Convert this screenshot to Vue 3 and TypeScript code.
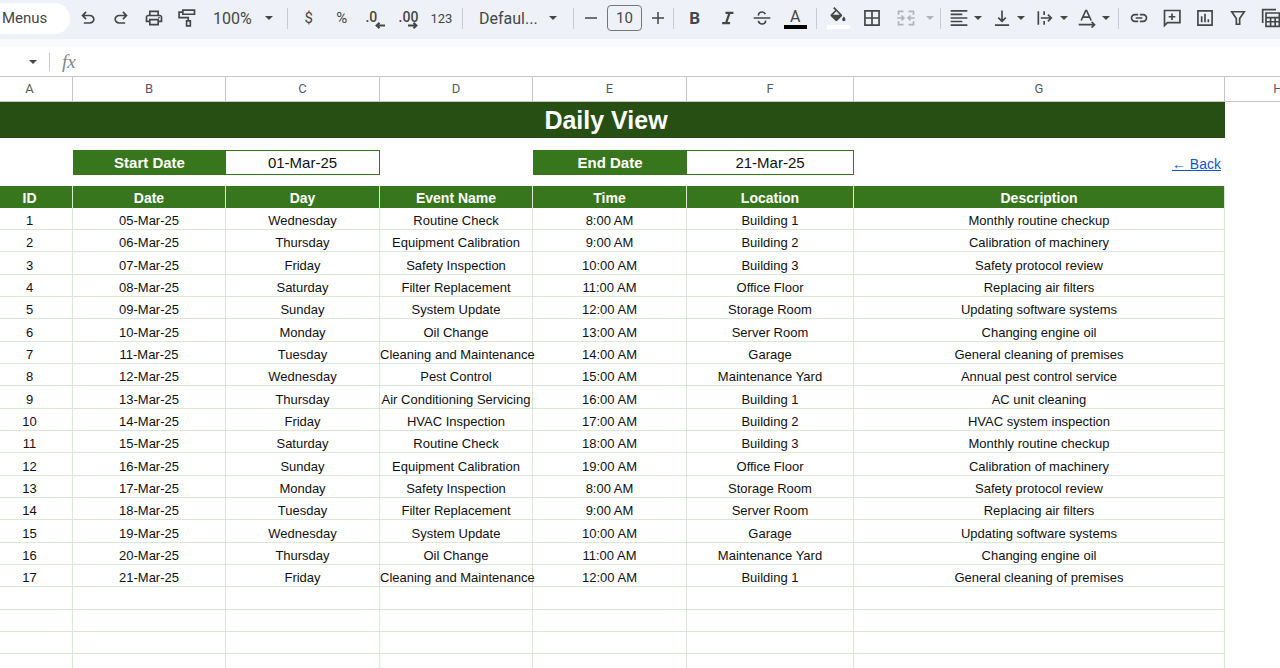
<script setup lang="ts">
import { ref } from 'vue'

interface Entry {
  id: number
  date: string
  day: string
  event: string
  time: string
  location: string
  description: string
}

const letters: string[] = ['A', 'B', 'C', 'D', 'E', 'F', 'G', 'H']
const headings: string[] = ['ID', 'Date', 'Day', 'Event Name', 'Time', 'Location', 'Description']
const emptyRows = 4

const days = ['Wednesday', 'Thursday', 'Friday', 'Saturday', 'Sunday', 'Monday', 'Tuesday']
const jobs: [string, string][] = [
  ['Routine Check', 'Monthly routine checkup'],
  ['Equipment Calibration', 'Calibration of machinery'],
  ['Safety Inspection', 'Safety protocol review'],
  ['Filter Replacement', 'Replacing air filters'],
  ['System Update', 'Updating software systems'],
  ['Oil Change', 'Changing engine oil'],
  ['Cleaning and Maintenance', 'General cleaning of premises'],
  ['Pest Control', 'Annual pest control service'],
  ['Air Conditioning Servicing', 'AC unit cleaning'],
  ['HVAC Inspection', 'HVAC system inspection'],
]
const places = [
  'Building 1', 'Building 2', 'Building 3', 'Office Floor',
  'Storage Room', 'Server Room', 'Garage', 'Maintenance Yard',
]

// One event a day; days, jobs, hours and places each repeat in their own cycle.
const entries: Entry[] = Array.from({ length: 17 }, (_, i) => {
  const hour = 8 + (i % 12)
  const [event, description] = jobs[i % jobs.length]
  return {
    id: i + 1,
    date: `${String(i + 5).padStart(2, '0')}-Mar-25`,
    day: days[i % days.length],
    event,
    time: `${hour}:00 AM`,
    location: places[i % places.length],
    description,
  }
})

const zoom = ref('100%')
const font = ref('Defaul...')
const size = ref('10')
const formula = ref('')
</script>

<template>
  <div class="app">
    <div class="toolbar" role="toolbar" aria-label="Formatting">
      <button class="menus" type="button">Menus</button>

      <div class="group history">
        <button type="button" aria-label="Undo">
          <svg class="icon" viewBox="0 -960 960 960"><path d="M280-200v-80h284q63 0 109.500-40T720-420q0-60-46.500-100T564-560H312l104 104-56 56-200-200 200-200 56 56-104 104h252q97 0 166.500 63T800-420q0 94-69.500 157T564-200H280Z" /></svg>
        </button>
        <button type="button" aria-label="Redo">
          <svg class="icon" viewBox="0 -960 960 960"><path d="M396-200q-97 0-166.500-63T160-420q0-94 69.500-157T396-640h252L544-744l56-56 200 200-200 200-56-56 104-104H396q-63 0-109.500 40T240-420q0 60 46.500 100T396-280h284v80H396Z" /></svg>
        </button>
        <button type="button" aria-label="Print">
          <svg class="icon" viewBox="0 -960 960 960"><path d="M640-640v-120H320v120h-80v-200h480v200h-80Zm80 180q17 0 28.500-11.500T760-500q0-17-11.500-28.500T720-540q-17 0-28.500 11.500T680-500q0 17 11.500 28.500T720-460Zm-80 260v-160H320v160h320Zm80 80H240v-160H80v-240q0-51 35-85.500t85-34.500h560q51 0 85.500 34.500T880-520v240H720v160Zm80-240v-160q0-17-11.500-28.500T760-560H200q-17 0-28.500 11.500T160-520v160h80v-80h480v80h80Z" /></svg>
        </button>
        <button type="button" aria-label="Paint format">
          <svg class="icon line" viewBox="0 0 24 24"><path d="M7 2.500h14v5H7zM7 5H2.500v6.500H13.500V15M11.500 15.500h4.500v6h-4.500z" /></svg>
        </button>
      </div>

      <label class="picker zoom">
        <select v-model="zoom" aria-label="Zoom"><option>100%</option></select>
        <svg class="caret" viewBox="0 0 10 5"><path d="M0 0h10L5 5z" /></svg>
      </label>
      <i class="rule"></i>

      <div class="group numbers">
        <button type="button" aria-label="Format as currency">$</button>
        <button type="button" aria-label="Format as percent">%</button>
        <button class="decimal" type="button" aria-label="Decrease decimal places">
          <span>.0</span>
          <svg viewBox="0 0 10 7"><path d="M10 3.500H2M4.500 .8 1.600 3.500l2.900 2.700" /></svg>
        </button>
        <button class="decimal" type="button" aria-label="Increase decimal places">
          <span>.00</span>
          <svg viewBox="0 0 10 7"><path d="M0 3.500h8M5.500 .8l2.900 2.700-2.900 2.700" /></svg>
        </button>
        <button class="digits" type="button" aria-label="More formats">123</button>
      </div>
      <i class="rule"></i>

      <label class="picker font">
        <select v-model="font" aria-label="Font"><option>Defaul...</option></select>
        <svg class="caret" viewBox="0 0 10 5"><path d="M0 0h10L5 5z" /></svg>
      </label>
      <i class="rule"></i>

      <div class="stepper">
        <button type="button" aria-label="Decrease font size">
          <svg class="icon line" viewBox="0 0 24 24"><path d="M4 12h16" /></svg>
        </button>
        <input v-model="size" type="text" aria-label="Font size" />
        <button type="button" aria-label="Increase font size">
          <svg class="icon line" viewBox="0 0 24 24"><path d="M4 12h16M12 4v16" /></svg>
        </button>
      </div>
      <i class="rule"></i>

      <div class="group style">
        <button class="bold" type="button" aria-label="Bold">B</button>
        <button type="button" aria-label="Italic">
          <svg class="icon" viewBox="0 0 24 24"><path d="M9 4.500v2.600h3l-3.300 9.800H5v2.600h9.500v-2.600h-3l3.300-9.800h3.700V4.500z" /></svg>
        </button>
        <button type="button" aria-label="Strikethrough">
          <svg class="icon line" viewBox="0 0 24 24"><path d="M2 12h20M7.800 9.200C7.600 6.200 9.500 4.800 12 4.800c2 0 3.300 .9 4 2.600M7.600 15.500c.6 2.500 2.200 3.700 4.500 3.700 2.600 0 4.300-1.400 4.200-4.200" /></svg>
        </button>
        <button class="swatch" type="button" aria-label="Text color">
          <span>A</span><i class="ink"></i>
        </button>
      </div>
      <i class="rule"></i>

      <div class="group cells">
        <button class="swatch" type="button" aria-label="Fill color">
          <svg class="icon" viewBox="0 0 24 24"><path d="M16.560 8.940L7.620 0 6.210 1.410l2.380 2.380-5.150 5.150c-.59.59-.59 1.540 0 2.120l5.500 5.500c.29.29.68.44 1.060.44s.77-.15 1.060-.44l5.500-5.500c.59-.58.59-1.530 0-2.120zM6 9.200L10 5.210 14 9.200H6zM19 11.500s-2 2.170-2 3.500c0 1.100.9 2 2 2s2-.9 2-2c0-1.330-2-3.500-2-3.500z" /></svg>
          <i class="paper"></i>
        </button>
        <button type="button" aria-label="Borders">
          <svg class="icon line" viewBox="0 0 24 24"><path d="M3.500 3.500h17v17h-17zM12 3.500v17M3.500 12h17" /></svg>
        </button>
        <button class="faded" type="button" aria-label="Merge cells">
          <svg class="icon line" viewBox="0 0 24 24"><path d="M9 4H3v4M3 16v4h6M15 4h6v4M21 16v4h-6M1.500 12H9M6.500 9l3 3-3 3M22.500 12H15M17.500 9l-3 3 3 3" /></svg>
        </button>
      </div>
      <button class="mini faded" type="button" aria-label="Merge options">
        <svg class="caret" viewBox="0 0 10 5"><path d="M0 0h10L5 5z" /></svg>
      </button>
      <i class="rule"></i>

      <div class="group align">
        <button type="button" aria-label="Horizontal align">
          <svg class="icon line" viewBox="0 0 24 24"><path d="M2 3.500h20M2 7.700h14M2 12h20M2 16.200h14M2 20.500h20" /></svg>
          <svg class="caret" viewBox="0 0 10 5"><path d="M0 0h10L5 5z" /></svg>
        </button>
        <button type="button" aria-label="Vertical align">
          <svg class="icon line" viewBox="0 0 24 24"><path d="M3.500 20.500h17M12 3v12.500M7.500 11.500 12 16l4.500-4.500" /></svg>
          <svg class="caret" viewBox="0 0 10 5"><path d="M0 0h10L5 5z" /></svg>
        </button>
        <button type="button" aria-label="Text wrapping">
          <svg class="icon line" viewBox="0 0 24 24"><path d="M4 4v16M11 4v4.500M11 15.500V20M7 12h12M15.500 8l4 4-4 4" /></svg>
          <svg class="caret" viewBox="0 0 10 5"><path d="M0 0h10L5 5z" /></svg>
        </button>
        <button type="button" aria-label="Text rotation">
          <svg class="icon line" viewBox="0 0 24 24"><path d="M5 15 10.500 3h1L17 15M7 11h8M2 20h18M17.500 16.500 21 20l-3.500 3.500" /></svg>
          <svg class="caret" viewBox="0 0 10 5"><path d="M0 0h10L5 5z" /></svg>
        </button>
      </div>
      <i class="rule"></i>

      <div class="group insert">
        <button type="button" aria-label="Insert link">
          <svg class="icon" viewBox="0 -960 960 960"><path d="M440-280H280q-83 0-141.500-58.500T80-480q0-83 58.500-141.500T280-680h160v80H280q-50 0-85 35t-35 85q0 50 35 85t85 35h160v80ZM320-440v-80h320v80H320Zm200 160v-80h160q50 0 85-35t35-85q0-50-35-85t-85-35H520v-80h160q83 0 141.500 58.500T880-480q0 83-58.500 141.500T680-280H520Z" /></svg>
        </button>
        <button type="button" aria-label="Insert comment">
          <svg class="icon line" viewBox="0 0 24 24"><path d="M3 21V3h18.500v14.500H6.500zM12 6.500v8M8 10.500h8" /></svg>
        </button>
        <button type="button" aria-label="Insert chart">
          <svg class="icon line" viewBox="0 0 24 24"><path d="M3.500 3.500h17v17h-17zM8 10v7M12 7v10M16 13.500V17" /></svg>
        </button>
        <button type="button" aria-label="Create a filter">
          <svg class="icon line" viewBox="0 0 24 24"><path d="M4.500 4.500h15L14 12.500V19.500h-4v-7z" /></svg>
        </button>
        <button type="button" aria-label="Table views">
          <svg class="icon line" viewBox="0 0 24 24"><path d="M2 18V2h16M6 6h16v16H6zM6 11.500h16M6 16.500h16M11.500 11.500V22M17 11.500V22" /></svg>
        </button>
      </div>
    </div>

    <div class="formula">
      <button class="namebox" type="button" aria-label="Name box">
        <svg class="caret" viewBox="0 0 10 5"><path d="M0 0h10L5 5z" /></svg>
      </button>
      <i class="rule"></i>
      <label class="fx" for="formula-input">fx</label>
      <input id="formula-input" v-model="formula" type="text" />
    </div>

    <main class="viewport">
      <table class="sheet">
        <colgroup>
          <col v-for="l in letters" :key="l" :class="`col-${l.toLowerCase()}`" />
        </colgroup>
        <thead>
          <tr class="letters">
            <th v-for="l in letters" :key="l" scope="col">{{ l }}</th>
          </tr>
        </thead>
        <tbody>
          <tr class="title"><th colspan="7">Daily View</th><td></td></tr>
          <tr class="spacer"><td colspan="8"></td></tr>
          <tr class="range">
            <td></td>
            <th scope="row">Start Date</th>
            <td class="value">01-Mar-25</td>
            <td></td>
            <th scope="row">End Date</th>
            <td class="value">21-Mar-25</td>
            <td class="back"><a href="#">← Back</a></td>
            <td></td>
          </tr>
          <tr class="spacer thin"><td colspan="8"></td></tr>
          <tr class="headings">
            <th v-for="h in headings" :key="h" scope="col">{{ h }}</th>
            <td></td>
          </tr>
        </tbody>
        <tbody class="entries">
          <tr v-for="e in entries" :key="e.id">
            <td>{{ e.id }}</td>
            <td>{{ e.date }}</td>
            <td>{{ e.day }}</td>
            <td>{{ e.event }}</td>
            <td>{{ e.time }}</td>
            <td>{{ e.location }}</td>
            <td>{{ e.description }}</td>
            <td></td>
          </tr>
          <tr v-for="n in emptyRows" :key="`empty-${n}`">
            <td v-for="l in letters" :key="l"></td>
          </tr>
        </tbody>
      </table>
    </main>
  </div>
</template>

<style>
body {
  margin: 0;
  background: #fff;
}
</style>

<style scoped>
.app {
  height: 100vh;
  display: flex;
  flex-direction: column;
  overflow: hidden;
  color: #444746;
  font-family: Roboto, "Liberation Sans", sans-serif;
}

button,
input,
select {
  margin: 0;
  padding: 0;
  border: 0;
  background: none;
  color: inherit;
  font: inherit;
  appearance: none;
}

.toolbar {
  flex: none;
  display: flex;
  align-items: center;
  height: 39px;
  padding-bottom: 3px;
  box-sizing: border-box;
  background: #eef2f8;
  font-size: 16px;
}

.toolbar > * {
  flex: none;
}

.menus {
  width: 70px;
  height: 31px;
  margin-right: 1px;
  padding-left: 2px;
  background: #fff;
  border-radius: 0 16px 16px 0;
  font-size: 15px;
  text-align: left;
}

.group {
  display: grid;
  grid-auto-flow: column;
  grid-auto-columns: minmax(0, 1fr);
  height: 32px;
}

.group button {
  display: flex;
  align-items: center;
  justify-content: center;
}

.icon {
  flex: none;
  width: 20px;
  height: 20px;
  fill: currentColor;
}

.icon.line {
  fill: none;
  stroke: currentColor;
  stroke-width: 2;
}

.caret {
  flex: none;
  width: 8px;
  height: 4px;
  fill: currentColor;
}

.rule {
  width: 1px;
  height: 21px;
  margin: 0 4px;
  background: #c7cbd1;
}

.history { width: 132px; }
.numbers { width: 166px; font-size: 15px; }
.style { width: 134px; }
.cells { width: 102px; }
.align { width: 171px; margin-left: 4px; margin-right: -6px; }
.insert { width: 164px; }

.picker {
  display: grid;
  align-items: center;
}

.picker > * {
  grid-area: 1 / 1;
}

.picker .caret {
  justify-self: end;
  margin-right: 10px;
  pointer-events: none;
}

.picker select {
  height: 32px;
  padding-left: 10px;
}

.zoom { width: 80px; }
.font { width: 98px; margin: 0 2px; }

.decimal {
  position: relative;
  font-weight: 500;
}

.group .decimal {
  justify-content: flex-start;
  padding: 0 0 3px 7px;
}

.decimal svg {
  position: absolute;
  right: 7px;
  bottom: 5px;
  width: 10px;
  height: 7px;
  fill: none;
  stroke: currentColor;
  stroke-width: 2;
}

.numbers .decimal {
  font-size: 14px;
}

.numbers .digits {
  font-size: 13px;
}

.stepper {
  display: flex;
  align-items: center;
  gap: 6px;
  margin: 0 1px 0 3px;
}

.stepper button {
  display: flex;
  justify-content: center;
  width: 20px;
}

.stepper .icon {
  width: 18px;
  height: 18px;
}

.stepper input {
  width: 35px;
  height: 26px;
  box-sizing: border-box;
  border: 1px solid #747775;
  border-radius: 4px;
  font-size: 15px;
  text-align: center;
}

.bold {
  font-size: 17px;
  font-weight: 700;
}

.group .swatch {
  flex-direction: column;
  justify-content: flex-end;
  padding-bottom: 5px;
}

.swatch span {
  line-height: 17px;
}

.swatch .icon {
  margin-bottom: -2px;
}

.swatch i {
  width: 23px;
  height: 4px;
}

.ink { background: #000; }
.paper { background: #fff; }

.faded {
  color: #b0b4b8;
}

.mini {
  display: flex;
  justify-content: center;
  width: 13px;
}

.group.align button {
  justify-content: flex-start;
  gap: 5px;
}

.formula {
  flex: none;
  display: flex;
  align-items: center;
  height: 37px;
  box-sizing: border-box;
  border-top: 8px solid #f8fafd;
}

.namebox {
  display: flex;
  justify-content: flex-end;
  width: 37px;
  margin-right: 8px;
}

.formula .rule {
  height: 18px;
}

.fx {
  margin-left: 8px;
  color: #80868b;
  font: italic 19px "Liberation Serif", serif;
}

.formula input {
  flex: 1;
  margin-left: 12px;
  outline: 0;
}

.viewport {
  flex: 1;
  min-height: 0;
  overflow: hidden;
  border-top: 1px solid #c4c7c5;
}

/* The first and last columns run past the edges of the viewport. */
.sheet {
  width: calc(100% + 65px);
  margin-left: -13px;
  table-layout: fixed;
  border-collapse: separate;
  border-spacing: 0;
  color: #111;
  font-family: "Liberation Sans", Arial, sans-serif;
  font-size: 13px;
  text-align: center;
}

.col-a { width: 86px; }
.col-b, .col-d { width: 153px; }
.col-c, .col-e { width: 154px; }
.col-f { width: 167px; }
.col-h { width: 107px; }

th,
td {
  box-sizing: border-box;
  padding: 0;
  line-height: 18px;
  white-space: nowrap;
}

.letters th {
  height: 25px;
  padding-bottom: 2px;
  border-right: 1px solid #c4c7c5;
  border-bottom: 1px solid #c4c7c5;
  color: #575b5f;
  font: 13px Roboto, sans-serif;
}

.title th {
  height: 36px;
  background: #274e13;
  color: #fff;
  font-size: 25px;
  line-height: 30px;
}

.spacer td { height: 12px; }
.spacer.thin td { height: 11px; }

.range th,
.range td {
  height: 25px;
  font-size: 15px;
}

.range th {
  background: #38761d;
  color: #fff;
}

.range .value {
  border: 1px solid #38761d;
  border-left: 0;
}

.range .back {
  padding: 3px 4px 0 0;
  font-size: 14px;
  text-align: right;
}

.back a {
  color: #1155cc;
}

.headings th {
  height: 22px;
  padding-top: 2px;
  background: #38761d;
  border-right: 1px solid #d9ead3;
  color: #fff;
  font-size: 14px;
}

.entries td {
  height: 22px;
  padding-top: 5px;
  border-right: 1px solid #d9ead3;
  border-bottom: 1px solid #d9ead3;
  line-height: 16px;
}

.entries tr:nth-child(3n) td {
  height: 23px;
}

.entries td:last-child {
  border: 0;
}
</style>
